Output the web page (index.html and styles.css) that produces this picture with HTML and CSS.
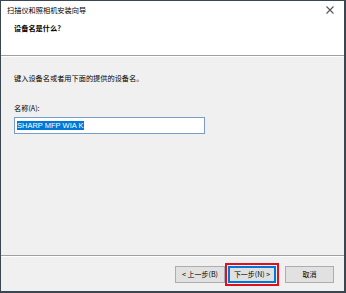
FILE: index.html
```html
<!DOCTYPE html>
<html lang="zh-CN">
<head>
<meta charset="utf-8">
<link rel="stylesheet" href="styles.css">
</head>
<body>
<div class="window">
  <div class="titlebar">
    <span class="title">扫描仪和照相机安装向导</span>
    <svg class="close" width="8" height="8" viewBox="0 0 8 8"><path d="M0.5 0.5 L7.5 7.5 M7.5 0.5 L0.5 7.5" stroke="#555" stroke-width="1.1"/></svg>
  </div>
  <div class="header">
    <div class="heading">设备名是什么?</div>
  </div>
  <div class="content">
    <div class="prompt">键入设备名或者用下面的提供的设备名。</div>
    <div class="label">名称(A):</div>
    <div class="input"><span class="sel">SHARP MFP WIA K</span></div>
  </div>
  <div class="footer">
    <div class="btn">&lt; 上一步(B)</div>
    <div class="highlight"><div class="btn default">下一步(N) &gt;</div></div>
    <div class="btn cancel">取消</div>
  </div>
</div>
</body>
</html>
```

FILE: styles.css
```css
html, body {
  margin: 0;
  padding: 0;
  width: 346px;
  height: 293px;
  overflow: hidden;
  background: #3a4750;
}
body {
  font-family: "Noto Sans CJK SC", "Noto Sans", sans-serif;
  font-size: 7.2px;
  color: #000;
}
.window {
  box-sizing: border-box;
  margin: 1px 2px 0 1px;
  width: 343px;
  height: 290px;
  background: #f0f0f0;
  display: flex;
  flex-direction: column;
}
.titlebar {
  height: 19px;
  background: #fff;
  display: flex;
  align-items: center;
  justify-content: space-between;
  padding: 0 10px 0 6px;
}
.title {
  line-height: 9px;
}
.close { display: block; margin-top: -2px; }
.header {
  background: #fff;
  height: 36px;
  padding: 4px 0 0 13px;
  box-sizing: border-box;
  border-bottom: 1px solid #a0a0a0;
  box-shadow: 0 1px 0 #fff;
}
.heading {
  font-weight: bold;
  line-height: 9px;
}
.content {
  flex: 1;
  padding: 18px 0 0 13px;
  border-bottom: 1px solid #a0a0a0;
}
.prompt { line-height: 9px; }
.label { line-height: 9px; margin-top: 21px; }
.input {
  margin-top: 4px;
  width: 191px;
  height: 17px;
  box-sizing: border-box;
  border: 1px solid #7a9cc9;
  background: #fff;
  padding: 3px 2px;
  display: flex;
  align-items: center;
}
.sel {
  font-family: "Liberation Sans", Arial, sans-serif;
  font-size: 7.5px;
  line-height: 9px;
  background: #0078d7;
  color: #fff;
  padding-right: 1px;
}
.footer {
  height: 35px;
  box-sizing: border-box;
  border-top: 1px solid #fff;
  display: flex;
  align-items: center;
  padding: 0 10px 0 174px;
}
.btn {
  box-sizing: border-box;
  width: 50px;
  height: 17px;
  background: #e1e1e1;
  border: 1px solid #adadad;
  display: flex;
  align-items: center;
  justify-content: center;
  font-size: 7px;
  white-space: nowrap;
}
.highlight {
  border: 2px solid #e0101e;
  padding: 1px;
  margin-right: 6px;
}
.btn.default {
  border: 1px solid #0078d7;
  box-shadow: inset 0 0 0 1px #0078d7;
  width: 48px;
}
.cancel { width: 49px; }
```
